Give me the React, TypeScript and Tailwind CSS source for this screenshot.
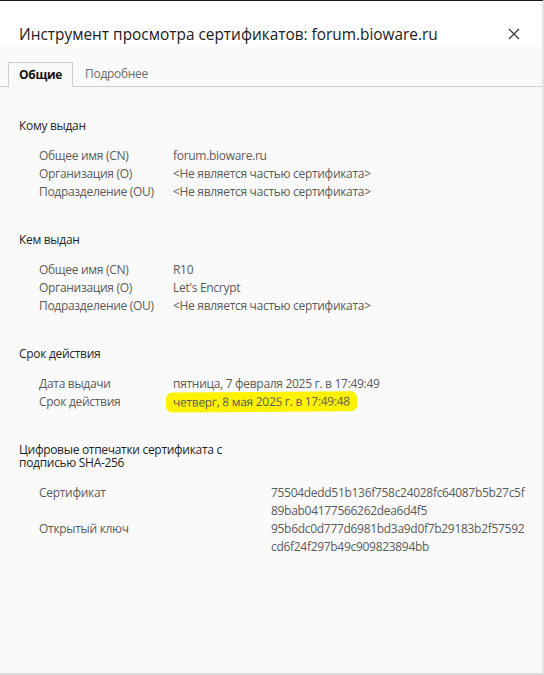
const font = { fontFamily: '"Open Sans", "Noto Sans", sans-serif' };

export default function App() {
  return (
    <div
      className="w-[544px] h-[675px] flex flex-col bg-[#fafafa] border-t border-[#1a1a1a] border-b-[2px] border-b-[#dcdcdc] border-r-[2px] border-r-[#e4e4e4] text-[12px] tracking-[-0.3px] overflow-hidden"
      style={font}
    >
      {/* Title bar */}
      <header className="h-[45px] bg-white flex justify-between pl-[19px] pr-[22px] shrink-0">
        <h1 className="pt-[24px] leading-[20px] text-[15.4px] tracking-normal text-[#202020]">
          Инструмент просмотра сертификатов: forum.bioware.ru
        </h1>
        <button className="pt-[27px] text-[#3a3a3a] self-start">
          <svg width="12" height="12" viewBox="0 0 12 12" stroke="currentColor" strokeWidth="1.3">
            <path d="M1 1L11 11M11 1L1 11" />
          </svg>
        </button>
      </header>

      {/* Tabs */}
      <div className="pt-[15px] pl-[8px] flex items-end border-b border-[#cfcfcf] shrink-0">
        <div className="h-[25px] px-[10px] flex items-center border border-b-0 border-[#cfcfcf] bg-[#fafafa] -mb-px font-bold text-[#111]">
          Общие
        </div>
        <div className="h-[25px] px-[12px] flex items-center text-[#6b6b6b]">Подробнее</div>
      </div>

      <main className="pl-[19px] pt-[30px]">
        <Section title="Кому выдан">
          <Row label="Общее имя (CN)" value="forum.bioware.ru" />
          <Row label="Организация (O)" value="<Не является частью сертификата>" />
          <Row label="Подразделение (OU)" value="<Не является частью сертификата>" />
        </Section>

        <Section title="Кем выдан">
          <Row label="Общее имя (CN)" value="R10" />
          <Row label="Организация (O)" value="Let's Encrypt" />
          <Row label="Подразделение (OU)" value="<Не является частью сертификата>" />
        </Section>

        <Section title="Срок действия">
          <Row label="Дата выдачи" value="пятница, 7 февраля 2025 г. в 17:49:49" />
          <div className="flex leading-[18px] text-[#5a5a5a]">
            <span className="w-[134px] shrink-0">Срок действия</span>
            <span className="-ml-[7px] pl-[7px] pr-[7px] bg-[#fff200] rounded-[6px] -my-[1px] py-[1px] -rotate-[0.4deg]">
              четверг, 8 мая 2025 г. в 17:49:48
            </span>
          </div>
        </Section>

        <div>
          <h2 className="leading-[13px] text-[#1f1f1f] pt-[2px]">
            Цифровые отпечатки сертификата с<br />подписью SHA-256
          </h2>
          <div className="mt-[15px] pl-[20px] text-[#5a5a5a] leading-[18px]">
            <div className="flex">
              <span className="w-[232px] shrink-0">Сертификат</span>
              <span>
                75504dedd51b136f758c24028fc64087b5b27c5f
                <br />
                89bab04177566262dea6d4f5
              </span>
            </div>
            <div className="flex">
              <span className="w-[232px] shrink-0">Открытый ключ</span>
              <span>
                95b6dc0d777d6981bd3a9d0f7b29183b2f57592
                <br />
                cd6f24f297b49c909823894bb
              </span>
            </div>
          </div>
        </div>
      </main>
    </div>
  );
}

function Section({ title, children }: any) {
  return (
    <section className="mb-[30px]">
      <h2 className="leading-[18px] text-[#1f1f1f]">{title}</h2>
      <div className="mt-[12px] pl-[20px]">{children}</div>
    </section>
  );
}

function Row({ label, value }: any) {
  return (
    <div className="flex leading-[18px] text-[#5a5a5a]">
      <span className="w-[134px] shrink-0">{label}</span>
      <span>{value}</span>
    </div>
  );
}
